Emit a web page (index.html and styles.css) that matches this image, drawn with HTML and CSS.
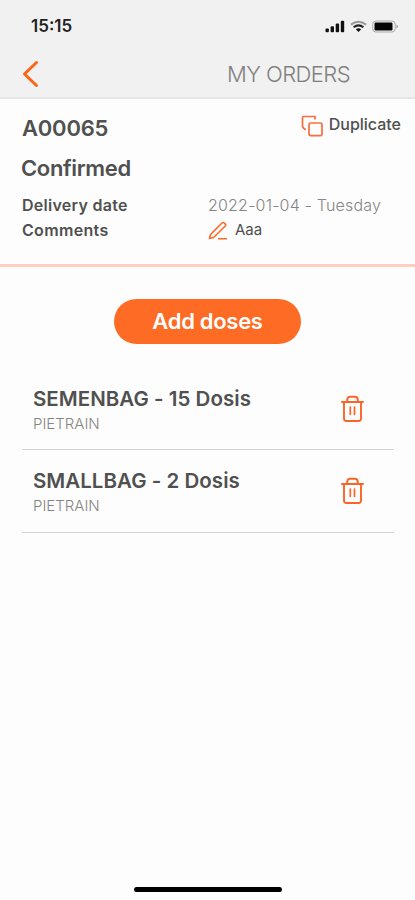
FILE: index.html
```html
<!DOCTYPE html>
<html lang="en">
<head>
<meta charset="utf-8">
<title>My orders</title>
<link rel="stylesheet" href="styles.css">
</head>
<body>
<div class="screen">
  <header class="header">
    <div class="status">
      <span class="time">15:15</span>
      <svg class="status-icons" width="75" height="14" viewBox="0 0 75 14">
        <g fill="#111"><rect x="0.5" y="8.5" width="3.4" height="3.8" rx="1"/><rect x="5.6" y="6.3" width="3.4" height="6" rx="1"/><rect x="10.7" y="3.5" width="3.4" height="8.8" rx="1"/><rect x="15.8" y="0.7" width="3.4" height="11.6" rx="1"/></g>
        <g fill="none" stroke-width="2"><path stroke="#999" d="M26 4.600Q33.500-1.200 41 4.600"/><path stroke="#222" d="M28.600 7.300Q33.500 3.400 38.400 7.300"/></g>
        <path fill="#111" d="M30.800 9.200Q33.500 7.400 36.200 9.200L33.500 12Z"/>
        <rect x="47.700" y="1" width="22.500" height="11" rx="3.200" fill="none" stroke="#aaa"/>
        <rect x="49.500" y="2.500" width="18" height="8" rx="1.200" fill="#050505"/>
        <path fill="#999" d="M71.500 4.600Q74.500 6.500 71.500 8.600Z"/>
      </svg>
    </div>
    <div class="nav">
      <svg class="back" width="18" height="28" viewBox="0 0 18 28"><path d="M15.500 2.500L3.500 14L15.500 25.500" fill="none" stroke="#fb6514" stroke-width="3" stroke-linecap="round" stroke-linejoin="round"/></svg>
      <h1 class="title">MY ORDERS</h1>
    </div>
  </header>

  <section class="summary">
    <div class="top-row">
      <h2 class="order-id">A00065</h2>
      <div class="duplicate">
        <svg width="22" height="22" viewBox="0 0 22 22" fill="none" stroke="#fb6d3c" stroke-width="1.700"><path d="M14 4.500V1.500H2.500Q1.500 1.500 1.500 2.500V11Q1.600 13.300 4.800 14.600"/><rect x="8" y="8" width="13" height="12.600" rx="1.800"/></svg>
        <span class="duplicate-label">Duplicate</span>
      </div>
    </div>
    <h2 class="state">Confirmed</h2>
    <div class="detail">
      <span class="label label-date">Delivery date</span>
      <span class="date">2022-01-04 - Tuesday</span>
    </div>
    <div class="detail detail-comment">
      <span class="label label-comments">Comments</span>
      <span class="comment">
        <svg width="20" height="20" viewBox="0 0 20 20" fill="none" stroke="#fb6a28" stroke-width="1.600" stroke-linecap="round" stroke-linejoin="round"><path d="M1.500 17.500L2.500 13.500L14 2Q15.200 1 16.300 2L17.200 2.900Q18.200 4 17.200 5L5.600 16.500Z"/><path d="M10.500 17.700H18.500"/></svg>
        <span class="comment-text">Aaa</span>
      </span>
    </div>
  </section>

  <main class="content">
    <button class="add">Add doses</button>
    <div class="list">
      <div class="item">
        <div>
          <div class="name">SEMENBAG - 15 Dosis</div>
          <div class="breed">PIETRAIN</div>
        </div>
        <svg class="trash" width="24" height="28" viewBox="0 0 24 28" fill="none" stroke="#f96528" stroke-width="1.900" stroke-linecap="round" stroke-linejoin="round"><path d="M2 7H23M4 7V23.500Q4 26 6.500 26H18.500Q21 26 21 23.500V7M7.200 6.500V5Q7.500 1.800 10 1.800H14.800Q17.800 1.800 17.800 5V6.500"/><path stroke-width="1.700" d="M10.300 12V19.300M14.500 12V19.300"/></svg>
      </div>
      <div class="item">
        <div>
          <div class="name">SMALLBAG - 2 Dosis</div>
          <div class="breed">PIETRAIN</div>
        </div>
        <svg class="trash" width="24" height="28" viewBox="0 0 24 28" fill="none" stroke="#f96528" stroke-width="1.900" stroke-linecap="round" stroke-linejoin="round"><path d="M2 7H23M4 7V23.500Q4 26 6.500 26H18.500Q21 26 21 23.500V7M7.200 6.500V5Q7.500 1.800 10 1.800H14.800Q17.800 1.800 17.800 5V6.500"/><path stroke-width="1.700" d="M10.300 12V19.300M14.500 12V19.300"/></svg>
      </div>
    </div>
  </main>
  <div class="home-bar"></div>
</div>
</body>
</html>
```
FILE: styles.css
```css
* { box-sizing: border-box; }
body { margin: 0; font-family: Inter, "Liberation Sans", sans-serif; color: #505050; background: #fdfdfd; }
h1, h2 { margin: 0; }
svg { display: block; flex: none; }
span, h1, h2, .name, .breed { white-space: nowrap; }

.screen { display: flex; flex-direction: column; height: 900px; overflow: hidden; }
.header { height: 99px; background: #f1f1f1; border-bottom: 2px solid #e6e6e6; }
.status { display: flex; justify-content: space-between; padding: 16px 15px 0 31px; height: 50px; }
.time { font-size: 17px; line-height: 20px; font-weight: 600; color: #222; }
.status-icons { margin-top: 4px; }
.nav { display: flex; align-items: center; height: 48px; padding-left: 21px; }
.title { margin-left: 188px; font-size: 22px; line-height: 28px; font-weight: 300; letter-spacing: -0.55px; color: #808080; }

.summary { height: 168px; padding: 16px 14px 0 22px; border-bottom: 3px solid #ffcfc2; }
.top-row { display: flex; justify-content: space-between; height: 40px; }
.order-id, .state { font-size: 22px; line-height: 26px; font-weight: 600; }
.order-id { letter-spacing: -0.2px; }
.state { height: 37px; margin-left: -1px; letter-spacing: -0.35px; }
.duplicate { display: flex; gap: 6px; }
.duplicate-label { font-size: 16px; line-height: 18px; font-weight: 500; }
.detail { display: grid; grid-template-columns: 186px 1fr; height: 25px; line-height: 26px; }
.detail-comment { line-height: 27px; }
.label { font-size: 16px; font-weight: 600; }
.label-date { letter-spacing: 0.27px; }
.label-comments { letter-spacing: 0.33px; }
.date { font-size: 16px; font-weight: 300; letter-spacing: 0.2px; color: #858585; }
.comment { display: flex; gap: 7px; }
.comment svg { margin-top: 4px; }
.comment-text { font-size: 15px; line-height: 26px; }

.content { flex: 1; display: flex; flex-direction: column; padding: 32px 21px 0 22px; }
.add { align-self: center; width: 187px; height: 45px; margin: 0 1px 0 0; padding: 0; border: 0; border-radius: 23px; background: #fe6b24; color: #fff; font: 600 22px/45px Inter, sans-serif; letter-spacing: -0.3px; }
.list { margin-top: 24px; }
.item { display: flex; justify-content: space-between; height: 82px; padding: 18px 30px 0 11px; border-bottom: 1px solid #cfd1d2; }
.item + .item { height: 83px; }
.name { font-size: 20.5px; line-height: 26px; font-weight: 600; letter-spacing: 0.03px; }
.breed { font-size: 15px; line-height: 24px; font-weight: 300; color: #858585; }
.trash { margin-top: 9px; }
.home-bar { width: 148px; height: 5px; margin: 0 auto 8px; border-radius: 3px; background: #000; }
```
